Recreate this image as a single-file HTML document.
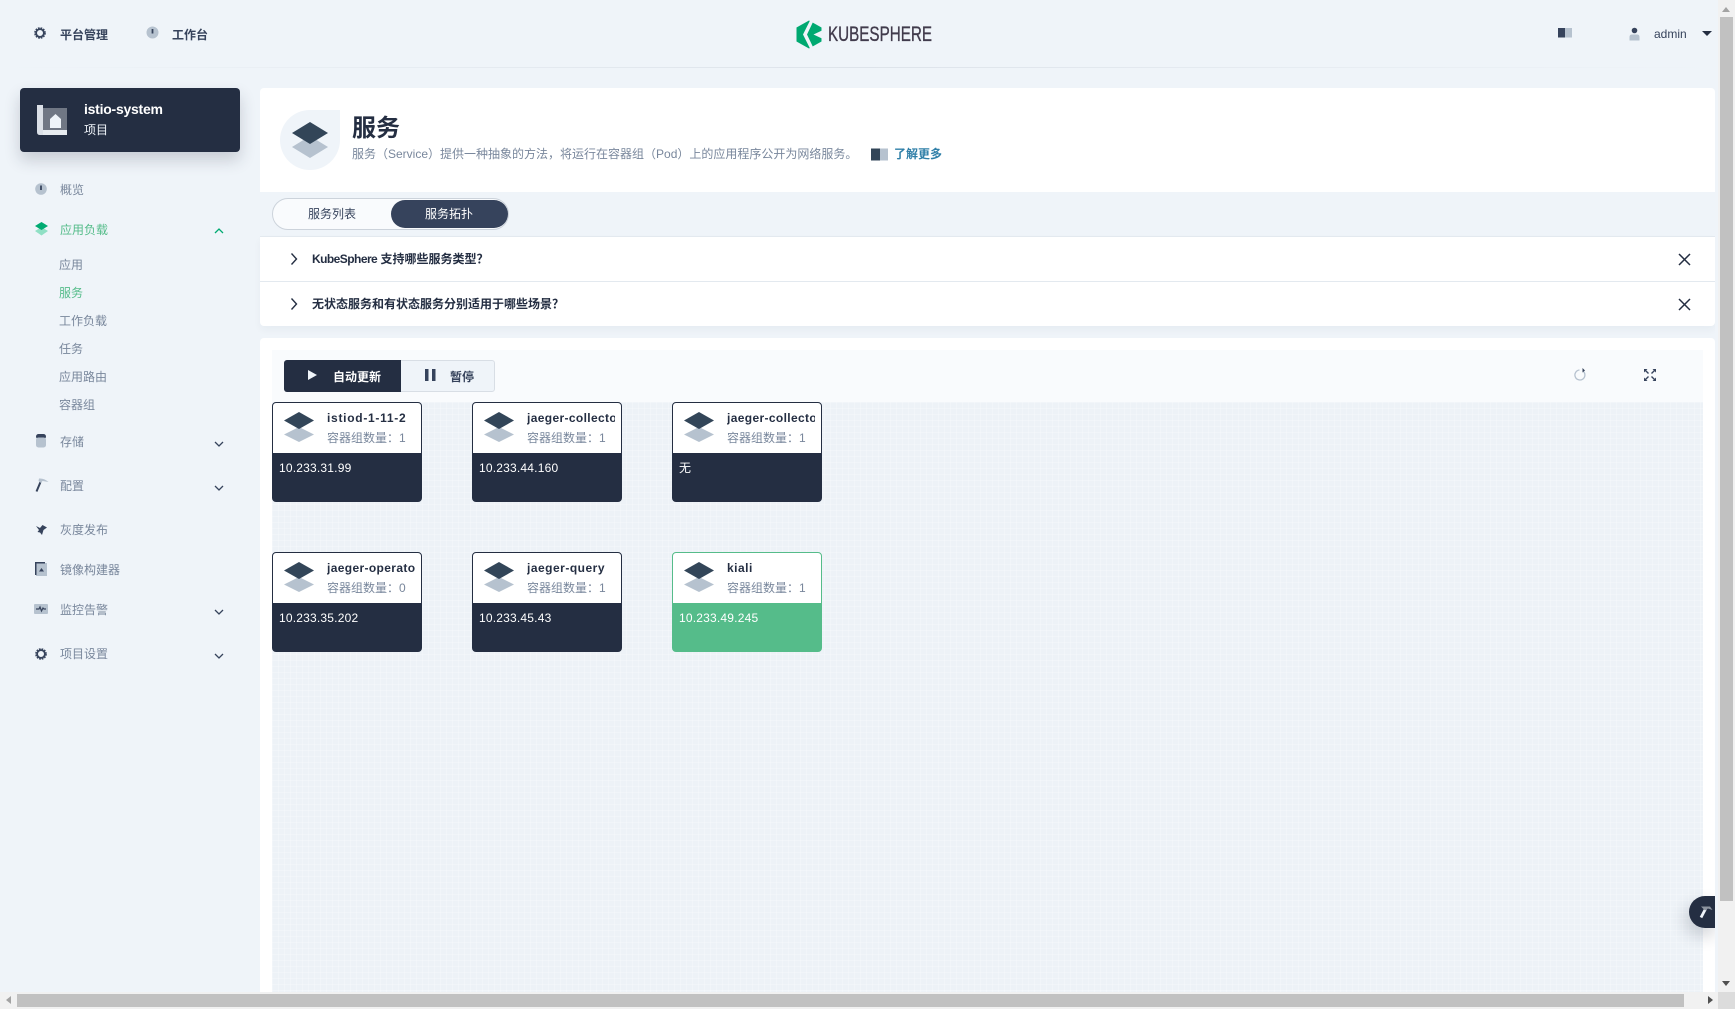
<!DOCTYPE html>
<html><head><meta charset="utf-8"><style>
html,body{margin:0;padding:0;width:1735px;height:1009px;overflow:hidden;background:#eff4f9}
body{position:relative;font-family:"Liberation Sans","Noto Sans CJK SC",sans-serif;font-size:12px;color:#79879c}
.a,.t,svg{position:absolute}
.t{white-space:nowrap;line-height:16px;transform:translateY(-8px)}
.b{font-weight:700;color:#36435c}
.n{color:#79879c}
.g{color:#55bc8a}
.card{position:absolute;width:150px;height:100px;box-sizing:border-box;border:1px solid #242e42;border-radius:4px;background:#242e42;overflow:hidden}
.card .h{position:absolute;left:0;top:0;width:148px;height:50px;background:#fff}
.card .nm{position:absolute;left:54px;top:7px;width:88px;overflow:hidden;white-space:nowrap;font-weight:700;color:#242e42;line-height:16px;letter-spacing:.5px}
.card .ct{position:absolute;left:54px;top:27px;white-space:nowrap;color:#79879c;line-height:16px}
.card .ip{position:absolute;left:6px;top:57px;color:#fff;line-height:16px;white-space:nowrap;letter-spacing:.2px}
.card svg{left:11px;top:9px}
.grn{border-color:#55bc8a;background:#55bc8a}
</style></head><body>

<div class="a" style="left:0;top:67px;width:1715px;height:1px;background:linear-gradient(90deg,#eff4f9,#dde3ea 50%,#eff4f9)"></div>

<svg style="left:34px;top:27px" width="12" height="12" viewBox="0 0 14 14"><circle cx="7" cy="7" r="4.5" fill="none" stroke="#36435c" stroke-width="2"/><circle cx="7" cy="7" r="6" fill="none" stroke="#36435c" stroke-width="1.6" stroke-dasharray="2 1.2"/></svg>
<div class="t b" style="left:60px;top:35px">平台管理</div>
<svg style="left:146px;top:26px" width="13" height="13" viewBox="0 0 13 13"><circle cx="6.5" cy="6.500" r="6" fill="#b6c2cf"/><path d="M6.5 3v4.500" stroke="#36435c" stroke-width="1.800"/></svg>
<div class="t b" style="left:172px;top:35px">工作台</div>

<svg style="left:796px;top:20px" width="26" height="29" viewBox="0 0 26 29"><path d="M13 .5 25.500 7.500V21.500L13 28.500.5 21.500V7.500Z" fill="#00a971"/><path d="M14 .5 7 14.500 14 28.500 17 27 11 14.500 17 2Z" fill="#eff4f9"/><path d="M26 10.500 17.500 14.500 26 18.500Z" fill="#eff4f9"/></svg>
<svg style="left:826px;top:20px;overflow:visible" width="110" height="28"><text x="2" y="21" font-family="Liberation Sans" font-size="21" fill="#413b4c" stroke="#413b4c" stroke-width=".35" textLength="104" lengthAdjust="spacingAndGlyphs">KUBESPHERE</text></svg>

<svg style="left:1558px;top:27px" width="15" height="11" viewBox="0 0 15 11"><rect x="0" y="1" width="7" height="9.500" fill="#36435c"/><rect x="7" y="1" width="7" height="9.500" fill="#b6c2cf"/></svg>
<svg style="left:1629px;top:27px" width="11" height="14" viewBox="0 0 11 14"><circle cx="5.500" cy="3.500" r="2.800" fill="#36435c"/><path d="M.5 13.500V10Q.5 7.500 3 7.500H8Q10.500 7.500 10.500 10V13.500Z" fill="#b6c2cf"/></svg>
<div class="t" style="left:1654px;top:34px;color:#36435c">admin</div>
<svg style="left:1702px;top:31px" width="10" height="6"><path d="M0 0H10L5 5Z" fill="#242e42"/></svg>

<div class="a" style="left:20px;top:88px;width:220px;height:64px;background:#242e42;border-radius:4px;box-shadow:0 8px 16px rgba(36,46,66,.2)"></div>
<svg style="left:37px;top:105px" width="30" height="30" viewBox="0 0 30 30"><path d="M0 0H6V25H30V30H3Q0 30 0 27Z" fill="#eff4f9" opacity=".9"/><rect x="6" y="3" width="24" height="27" fill="#fff" opacity=".35"/><path d="M13 14 18.500 9 24 14V23H13Z" fill="#eff4f9"/></svg>
<div class="t" style="left:84px;top:109px;color:#fff;font-size:14px;font-weight:700;letter-spacing:-.25px">istio-system</div>
<div class="t" style="left:84px;top:130px;color:#eff4f9">项目</div>

<svg style="left:35px;top:183px" width="12" height="12" viewBox="0 0 12 12"><circle cx="6" cy="6" r="5.800" fill="#b6c2cf"/><path d="M6 2.500V7" stroke="#36435c" stroke-width="1.800"/></svg>
<div class="t n" style="left:60px;top:190px">概览</div>
<svg style="left:35px;top:222px" width="13" height="14" viewBox="0 0 13 14"><path d="M6.500 5 13 9 6.500 13.500 0 9Z" fill="#90e0c5"/><path d="M6.500 0 13 4 6.500 8 0 4Z" fill="#00aa72"/></svg>
<div class="t g" style="left:60px;top:230px">应用负载</div>
<svg style="left:214px;top:228px" width="10" height="6"><path d="M1 5 5 1 9 5" fill="none" stroke="#00aa72" stroke-width="1.300"/></svg>
<div class="t n" style="left:59px;top:265px">应用</div>
<div class="t g" style="left:59px;top:293px">服务</div>
<div class="t n" style="left:59px;top:321px">工作负载</div>
<div class="t n" style="left:59px;top:349px">任务</div>
<div class="t n" style="left:59px;top:377px">应用路由</div>
<div class="t n" style="left:59px;top:405px">容器组</div>

<svg style="left:36px;top:434px" width="10" height="14" viewBox="0 0 10 14"><rect y="0" width="10" height="5" rx="2.500" fill="#36435c"/><rect y="3.500" width="10" height="10" rx="2.500" fill="#b6c2cf"/></svg>
<div class="t n" style="left:60px;top:442px">存储</div>
<svg style="left:214px;top:441px" width="10" height="6"><path d="M1 1 5 5 9 1" fill="none" stroke="#36435c" stroke-width="1.300"/></svg>

<svg style="left:35px;top:478px" width="14" height="14" viewBox="0 0 14 14"><path d="M1.500 13.500 5.500 4" stroke="#36435c" stroke-width="2"/><path d="M4 .5Q9 0 13.500 4L7.500 3 6 5 3.500 3Z" fill="#b6c2cf"/></svg>
<div class="t n" style="left:60px;top:486px">配置</div>
<svg style="left:214px;top:485px" width="10" height="6"><path d="M1 1 5 5 9 1" fill="none" stroke="#36435c" stroke-width="1.300"/></svg>

<svg style="left:36px;top:524px" width="11" height="12" viewBox="0 0 11 12"><path d="M0 2 4 4 6.500 1 11 3.500 7.500 6 6 11 4 8.500 1.500 8 3 6Z" fill="#36435c"/></svg>
<div class="t n" style="left:60px;top:530px">灰度发布</div>

<svg style="left:35px;top:562px" width="12" height="14" viewBox="0 0 12 14"><rect x="1" y="1" width="11" height="13" fill="#b6c2cf"/><path d="M0 0H10V1.500H1.500V13H0Z" fill="#36435c"/><path d="M6.500 6 9 9.500H4Z" fill="#36435c"/></svg>
<div class="t n" style="left:60px;top:570px">镜像构建器</div>

<svg style="left:34px;top:604px" width="14" height="10" viewBox="0 0 14 10"><rect width="14" height="10" rx="1" fill="#b6c2cf"/><path d="M2 5H5L6 3 7.500 7 9 4 10 5H12" fill="none" stroke="#36435c" stroke-width="1.200"/></svg>
<div class="t n" style="left:60px;top:610px">监控告警</div>
<svg style="left:214px;top:609px" width="10" height="6"><path d="M1 1 5 5 9 1" fill="none" stroke="#36435c" stroke-width="1.300"/></svg>

<svg style="left:35px;top:648px" width="12" height="12" viewBox="0 0 14 14"><circle cx="7" cy="7" r="4.500" fill="none" stroke="#36435c" stroke-width="2"/><circle cx="7" cy="7" r="6" fill="none" stroke="#36435c" stroke-width="1.600" stroke-dasharray="2 1.200"/></svg>
<div class="t n" style="left:60px;top:654px">项目设置</div>
<svg style="left:214px;top:653px" width="10" height="6"><path d="M1 1 5 5 9 1" fill="none" stroke="#36435c" stroke-width="1.300"/></svg>

<div class="a" style="left:260px;top:88px;width:1455px;height:104px;background:#fff;border-radius:4px 4px 0 0"></div>
<div class="a" style="left:280px;top:110px;width:60px;height:60px;background:#eff4f9;border-radius:50% 0 50% 50%"></div>
<svg style="left:292px;top:122px" width="36" height="36" viewBox="0 0 36 36"><path d="M18 14 36 25 18 36 0 25Z" fill="#b6c2cf"/><path d="M18 0 36 11 18 22 0 11Z" fill="#324558"/></svg>
<div class="t" style="left:352px;top:129px;font-size:24px;font-weight:700;color:#242e42;line-height:32px;transform:translateY(-16px)">服务</div>
<div class="t n" style="left:352px;top:154px">服务（Service）提供一种抽象的方法，将运行在容器组（Pod）上的应用程序公开为网络服务。</div>
<svg style="left:871px;top:148px" width="18" height="13" viewBox="0 0 18 13"><rect y=".5" width="9" height="12" fill="#324558"/><rect x="9" y=".5" width="8" height="12" fill="#b6c2cf"/></svg>
<div class="t" style="left:894px;top:154px;font-weight:700;color:#2f7fa8">了解更多</div>

<div class="a" style="left:272px;top:198px;width:235px;height:30px;border:1px solid #ccd3db;border-radius:16px;background:#f9fbfd"></div>
<div class="a" style="left:391px;top:200px;width:117px;height:28px;border-radius:14px;background:#36435c"></div>
<div class="t" style="left:308px;top:214px;color:#36435c">服务列表</div>
<div class="t" style="left:425px;top:214px;color:#fff">服务拓扑</div>

<div class="a" style="left:260px;top:236px;width:1455px;height:90px;background:#fff;border-top:1px solid #e3e9ef;box-sizing:border-box;border-radius:0 0 4px 4px;box-shadow:0 4px 8px rgba(36,46,66,.04)"></div>
<div class="a" style="left:260px;top:281px;width:1455px;height:1px;background:#e3e9ef"></div>
<svg style="left:290px;top:252px" width="8" height="14"><path d="M1.500 1.500 6.500 7 1.500 12.500" fill="none" stroke="#242e42" stroke-width="1.400"/></svg>
<svg style="left:290px;top:297px" width="8" height="14"><path d="M1.500 1.500 6.500 7 1.500 12.500" fill="none" stroke="#242e42" stroke-width="1.400"/></svg>
<div class="t" style="left:312px;top:259px;font-weight:700;color:#242e42"><span style="letter-spacing:-.55px">KubeSphere</span> 支持哪些服务类型？</div>
<div class="t" style="left:312px;top:304px;font-weight:700;color:#242e42">无状态服务和有状态服务分别适用于哪些场景？</div>
<svg style="left:1678px;top:253px" width="13" height="13"><path d="M1 1 12 12M12 1 1 12" stroke="#242e42" stroke-width="1.500"/></svg>
<svg style="left:1678px;top:298px" width="13" height="13"><path d="M1 1 12 12M12 1 1 12" stroke="#242e42" stroke-width="1.500"/></svg>

<div class="a" style="left:260px;top:338px;width:1455px;height:654px;background:#fff;border-radius:4px 4px 0 0"></div>
<div class="a" style="left:272px;top:350px;width:1431px;height:52px;background:#f9fbfd"></div>
<div class="a" style="left:272px;top:402px;width:1431px;height:590px;background-color:#edf2f7;background-image:linear-gradient(rgba(255,255,255,.22) 1px,transparent 1px),linear-gradient(90deg,rgba(255,255,255,.22) 1px,transparent 1px);background-size:6px 6px"></div>

<div class="a" style="left:284px;top:360px;width:211px;height:32px;box-sizing:border-box;border:1px solid #d8dee5;border-radius:3px;background:#eff4f9"></div>
<div class="a" style="left:284px;top:360px;width:117px;height:32px;border-radius:3px 0 0 3px;background:#242e42"></div>
<svg style="left:308px;top:370px" width="9" height="10"><path d="M0 0 9 5 0 10Z" fill="#eff4f9"/></svg>
<div class="t" style="left:333px;top:377px;color:#fff;font-weight:700">自动更新</div>
<svg style="left:425px;top:369px" width="11" height="12"><path d="M0 0H3.500V12H0ZM7 0H10.500V12H7Z" fill="#36435c"/></svg>
<div class="t" style="left:450px;top:377px;color:#36435c;font-weight:700">暂停</div>

<svg style="left:1574px;top:368px" width="12" height="13" viewBox="0 0 12 13"><path d="M9.500 3.500A5 5 0 1 1 5.500 2" fill="none" stroke="#b6c2cf" stroke-width="1.300"/><path d="M8.500 0V4.500L11 2.500Z" fill="#36435c"/></svg>
<svg style="left:1644px;top:369px" width="12" height="12" viewBox="0 0 12 12"><path d="M4.500 4.500 1.500 1.500M7.500 4.500 10.500 1.500M4.500 7.500 1.500 10.500M7.500 7.500 10.500 10.500" stroke="#36435c" stroke-width="1.400"/><path d="M0 0H3.500L0 3.500ZM12 0V3.500L8.500 0ZM0 12V8.500L3.500 12ZM12 12H8.500L12 8.500Z" fill="#36435c"/></svg>

<div class="card" style="left:272px;top:402px"><div class="h"></div><svg width="30" height="30" viewBox="0 0 30 30"><path d="M15 15 30 22.500 15 30 0 22.500Z" fill="#b6c2cf"/><path d="M15 0 30 8.500 15 17 0 8.500Z" fill="#324558"/></svg><div class="nm" style="letter-spacing:.72px">istiod-1-11-2</div><div class="ct">容器组数量：1</div><div class="ip">10.233.31.99</div></div>
<div class="card" style="left:472px;top:402px"><div class="h"></div><svg width="30" height="30" viewBox="0 0 30 30"><path d="M15 15 30 22.500 15 30 0 22.500Z" fill="#b6c2cf"/><path d="M15 0 30 8.500 15 17 0 8.500Z" fill="#324558"/></svg><div class="nm" style="letter-spacing:.36px">jaeger-collector</div><div class="ct">容器组数量：1</div><div class="ip">10.233.44.160</div></div>
<div class="card" style="left:672px;top:402px"><div class="h"></div><svg width="30" height="30" viewBox="0 0 30 30"><path d="M15 15 30 22.500 15 30 0 22.500Z" fill="#b6c2cf"/><path d="M15 0 30 8.500 15 17 0 8.500Z" fill="#324558"/></svg><div class="nm" style="letter-spacing:.36px">jaeger-collector-headless</div><div class="ct">容器组数量：1</div><div class="ip">无</div></div>
<div class="card" style="left:272px;top:552px"><div class="h"></div><svg width="30" height="30" viewBox="0 0 30 30"><path d="M15 15 30 22.500 15 30 0 22.500Z" fill="#b6c2cf"/><path d="M15 0 30 8.500 15 17 0 8.500Z" fill="#324558"/></svg><div class="nm" style="letter-spacing:.36px">jaeger-operator</div><div class="ct">容器组数量：0</div><div class="ip">10.233.35.202</div></div>
<div class="card" style="left:472px;top:552px"><div class="h"></div><svg width="30" height="30" viewBox="0 0 30 30"><path d="M15 15 30 22.500 15 30 0 22.500Z" fill="#b6c2cf"/><path d="M15 0 30 8.500 15 17 0 8.500Z" fill="#324558"/></svg><div class="nm">jaeger-query</div><div class="ct">容器组数量：1</div><div class="ip">10.233.45.43</div></div>
<div class="card grn" style="left:672px;top:552px"><div class="h"></div><svg width="30" height="30" viewBox="0 0 30 30"><path d="M15 15 30 22.500 15 30 0 22.500Z" fill="#b6c2cf"/><path d="M15 0 30 8.500 15 17 0 8.500Z" fill="#324558"/></svg><div class="nm">kiali</div><div class="ct">容器组数量：1</div><div class="ip">10.233.49.245</div></div>

<div class="a" style="left:1689px;top:896px;width:29px;height:32px;background:#242e42;border-radius:16px 0 0 16px;box-shadow:-4px 8px 16px rgba(36,46,66,.2)"></div>
<svg style="left:1699px;top:903px" width="14" height="16" viewBox="0 0 14 16"><path d="M2 14.500 6.500 6" stroke="#eff4f9" stroke-width="2.800"/><path d="M2 3.500H11L13.500 7 9 5.500 6 7.500Z" fill="#8d949f"/></svg>

<div class="a" style="left:1715px;top:0;width:3px;height:992px;background:#eff4f9"></div>
<div class="a" style="left:1718px;top:0;width:17px;height:992px;background:#f1f1f1"></div>
<div class="a" style="left:1720px;top:17px;width:13px;height:884px;background:#c1c1c1"></div>
<svg style="left:1722px;top:7px" width="8" height="5"><path d="M0 5 4 0 8 5Z" fill="#a3a3a3"/></svg>
<svg style="left:1722px;top:981px" width="8" height="5"><path d="M0 0 4 5 8 0Z" fill="#505050"/></svg>
<div class="a" style="left:0;top:992px;width:1718px;height:17px;background:#f1f1f1"></div>
<div class="a" style="left:17px;top:994px;width:1667px;height:13px;background:#c1c1c1"></div>
<svg style="left:6px;top:996px" width="5" height="8"><path d="M5 0 0 4 5 8Z" fill="#a3a3a3"/></svg>
<svg style="left:1708px;top:996px" width="5" height="8"><path d="M0 0 5 4 0 8Z" fill="#505050"/></svg>
<div class="a" style="left:1718px;top:992px;width:17px;height:17px;background:#dcdcdc"></div>
</body></html>
